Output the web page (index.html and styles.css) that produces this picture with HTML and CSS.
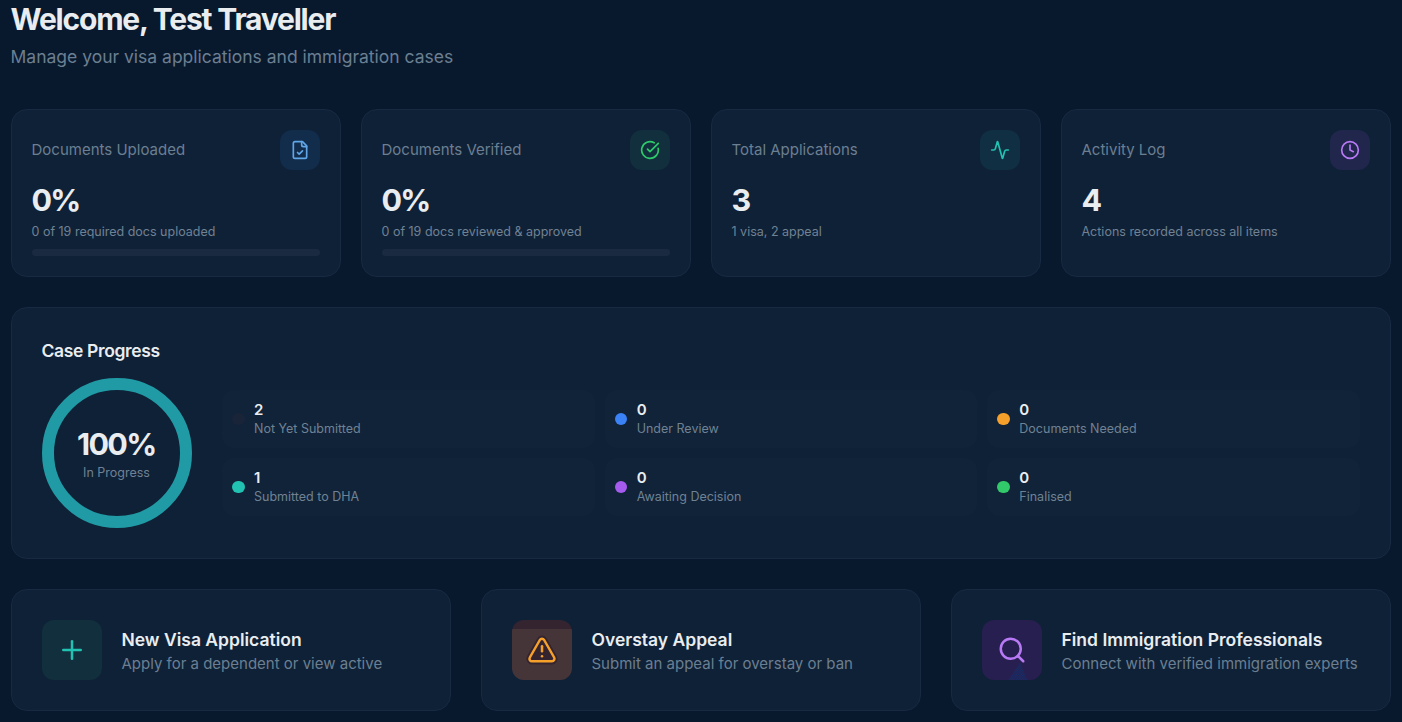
FILE: index.html
```html
<!DOCTYPE html>
<html lang="en">
<head>
<meta charset="utf-8">
<title>Dashboard</title>
<link rel="stylesheet" href="styles.css">
</head>
<body>
<main class="dashboard">
  <header class="welcome">
    <h1 class="welcome-title">Welcome, Test Traveller</h1>
    <p class="welcome-sub">Manage your visa applications and immigration cases</p>
  </header>

  <section class="stats">
    <article class="card stat">
      <div class="stat-head"><span class="stat-label">Documents Uploaded</span>
        <span class="stat-icon blue"><svg class="icon" viewBox="0 0 24 24"><path d="M15 2H6a2 2 0 0 0-2 2v16a2 2 0 0 0 2 2h12a2 2 0 0 0 2-2V7Z"/><path d="M14 2v4a2 2 0 0 0 2 2h4"/><path d="m9 15 2 2 4-4"/></svg></span></div>
      <div class="stat-value">0%</div>
      <div class="stat-note">0 of 19 required docs uploaded</div>
      <div class="bar"></div>
    </article>
    <article class="card stat">
      <div class="stat-head"><span class="stat-label">Documents Verified</span>
        <span class="stat-icon green"><svg class="icon" viewBox="0 0 24 24"><path d="M21.801 10A10 10 0 1 1 17 3.335"/><path d="m9 11 3 3L22 4"/></svg></span></div>
      <div class="stat-value">0%</div>
      <div class="stat-note">0 of 19 docs reviewed &amp; approved</div>
      <div class="bar"></div>
    </article>
    <article class="card stat">
      <div class="stat-head"><span class="stat-label">Total Applications</span>
        <span class="stat-icon teal"><svg class="icon" viewBox="0 0 24 24"><path d="M22 12h-2.48a2 2 0 0 0-1.93 1.46l-2.35 8.36a.25.25 0 0 1-.48 0L9.24 2.18a.25.25 0 0 0-.48 0l-2.35 8.36A2 2 0 0 1 4.49 12H2"/></svg></span></div>
      <div class="stat-value">3</div>
      <div class="stat-note">1 visa, 2 appeal</div>
    </article>
    <article class="card stat">
      <div class="stat-head"><span class="stat-label">Activity Log</span>
        <span class="stat-icon purple"><svg class="icon" viewBox="0 0 24 24"><circle cx="12" cy="12" r="10"/><path d="M12 6v6l4 2"/></svg></span></div>
      <div class="stat-value">4</div>
      <div class="stat-note">Actions recorded across all items</div>
    </article>
  </section>

  <section class="card progress">
    <h2 class="progress-title">Case Progress</h2>
    <div class="progress-body">
      <div class="ring">
        <div class="ring-value">100%</div>
        <div class="ring-label">In Progress</div>
      </div>
      <div class="statuses">
        <div class="status"><i class="dot dot-muted"></i><div class="status-text"><div class="status-count">2</div><div class="status-label">Not Yet Submitted</div></div></div>
        <div class="status"><i class="dot dot-blue"></i><div class="status-text"><div class="status-count">0</div><div class="status-label">Under Review</div></div></div>
        <div class="status"><i class="dot dot-orange"></i><div class="status-text"><div class="status-count">0</div><div class="status-label">Documents Needed</div></div></div>
        <div class="status"><i class="dot dot-teal"></i><div class="status-text"><div class="status-count">1</div><div class="status-label">Submitted to DHA</div></div></div>
        <div class="status"><i class="dot dot-purple"></i><div class="status-text"><div class="status-count">0</div><div class="status-label">Awaiting Decision</div></div></div>
        <div class="status"><i class="dot dot-green"></i><div class="status-text"><div class="status-count">0</div><div class="status-label">Finalised</div></div></div>
      </div>
    </div>
  </section>

  <section class="actions">
    <a class="card action">
      <span class="action-icon add"><svg class="icon" viewBox="0 0 24 24"><path d="M5 12h14"/><path d="M12 5v14"/></svg></span>
      <span class="action-text"><span class="action-title">New Visa Application</span><span class="action-sub">Apply for a dependent or view active</span></span>
    </a>
    <a class="card action">
      <span class="action-icon warn"><svg class="icon" viewBox="0 0 24 24"><path class="halo" d="m21.73 18-8-14a2 2 0 0 0-3.48 0l-8 14A2 2 0 0 0 4 21h16a2 2 0 0 0 1.73-3Z"/><path d="m21.73 18-8-14a2 2 0 0 0-3.48 0l-8 14A2 2 0 0 0 4 21h16a2 2 0 0 0 1.73-3Z"/><path d="M12 9v4"/><path d="M12 17h.01"/></svg></span>
      <span class="action-text"><span class="action-title">Overstay Appeal</span><span class="action-sub">Submit an appeal for overstay or ban</span></span>
    </a>
    <a class="card action">
      <span class="action-icon find"><svg class="icon" viewBox="0 0 24 24"><defs><pattern id="dots" width="2" height="2" patternUnits="userSpaceOnUse"><rect class="speckle-dot" width="1" height="1"/><rect class="speckle-dot" x="1" y="1" width="1" height="1"/></pattern></defs><path class="speckle" fill="url(#dots)" d="M18.5 22 9 36H24Z"/><circle cx="11" cy="11" r="8"/><path d="m21 21-4.3-4.3"/></svg></span>
      <span class="action-text"><span class="action-title">Find Immigration Professionals</span><span class="action-sub">Connect with verified immigration experts</span></span>
    </a>
  </section>
</main>
</body>
</html>
```
FILE: styles.css
```css
* { box-sizing: border-box; }
html, body { height: 100%; overflow: hidden; }
body {
  margin: 0;
  background: #08192e;
  color: #e9edf0;
  font-family: Inter, "Liberation Sans", sans-serif;
}
.dashboard { padding: 0 11px; }
.welcome { height: 109px; }
.welcome-title {
  margin: 0 0 0 -0.5px;
  padding-top: 1px;
  font-size: 30px;
  line-height: 36px;
  font-weight: 700;
  letter-spacing: -1.2px;
}
.welcome-sub {
  margin: 7px 0 0 -0.5px;
  font-size: 17.5px;
  line-height: 26px;
  color: #6b7f91;
}
.card {
  background: #0f2137;
  border: 1px solid #172a41;
  border-radius: 16px;
}
.icon {
  width: 20px;
  height: 20px;
  fill: none;
  stroke: currentColor;
  stroke-width: 2;
  stroke-linecap: round;
  stroke-linejoin: round;
}

.stats {
  display: grid;
  grid-template-columns: repeat(4, 1fr);
  gap: 20px;
}
.stat { height: 168px; padding: 20px; }
.stat-head {
  display: flex;
  align-items: center;
  justify-content: space-between;
}
.stat-label { margin-left: -0.5px; font-size: 15px; line-height: 20px; color: #6b7f91; }
.stat-icon {
  display: flex;
  align-items: center;
  justify-content: center;
  width: 40px;
  height: 40px;
  border-radius: 12px;
}
.blue { background: #122c4b; color: #60a5e6; }
.green { background: #112f3c; color: #2fcb6b; }
.teal { background: #112f42; color: #22c2b2; }
.purple { background: #20264c; color: #b879f5; }
.stat-value {
  margin: 11px 0 0 -0.5px;
  font-size: 30.5px;
  line-height: 38px;
  font-weight: 700;
  letter-spacing: -1.7px;
}
.stat-note {
  margin: 4px 0 0 -0.5px;
  font-size: 12.5px;
  line-height: 18px;
  color: #6f8293;
}
.bar {
  height: 7px;
  margin-top: 8px;
  border-radius: 4px;
  background: #1a2a41;
}

.progress { height: 252px; margin-top: 30px; padding: 30px; }
.progress-title {
  margin: 0 0 0 -0.5px;
  height: 40px;
  font-size: 17.5px;
  line-height: 26px;
  font-weight: 600;
  letter-spacing: -0.36px;
}
.progress-body { display: flex; align-items: center; gap: 30px; }
.ring {
  flex: none;
  display: flex;
  flex-direction: column;
  align-items: center;
  justify-content: center;
  width: 150px;
  height: 150px;
  border: 12.5px solid #209ba5;
  border-radius: 50%;
}
.ring-value {
  padding: 0 1.5px 1px 0;
  font-size: 30.5px;
  line-height: 38px;
  font-weight: 700;
  letter-spacing: -1.7px;
}
.ring-label { padding-right: 1px; font-size: 12.5px; line-height: 18px; color: #6f8293; }
.statuses {
  flex: 1;
  display: grid;
  grid-template-columns: repeat(3, 1fr);
  gap: 10px;
}
.status {
  display: flex;
  align-items: center;
  gap: 10px;
  height: 58px;
  padding: 10px;
  border-radius: 12px;
  background: #112338;
}
.dot { width: 12.5px; height: 12.5px; margin-right: -0.5px; border-radius: 50%; }
.dot-muted { background: #192439; }
.dot-blue { background: #3b82f6; }
.dot-orange { background: #f5a02a; }
.dot-teal { background: #22c2b2; }
.dot-purple { background: #a65bef; }
.dot-green { background: #31c969; }
.status-count { font-size: 15px; line-height: 20px; font-weight: 600; }
.status-label { font-size: 12.5px; line-height: 18px; color: #6f8293; }

.actions {
  display: grid;
  grid-template-columns: repeat(3, 1fr);
  gap: 30px;
  margin-top: 30px;
}
.action {
  display: flex;
  align-items: center;
  gap: 19.5px;
  height: 122px;
  padding: 30px;
}
.action-icon {
  flex: none;
  display: flex;
  align-items: center;
  justify-content: center;
  width: 60px;
  height: 60px;
  border-radius: 12px;
  overflow: hidden;
}
.action-icon .icon { width: 30px; height: 30px; overflow: visible; }
.add { background: #112f3c; color: #22c2b2; }
.warn { background: linear-gradient(#33242f 9px, #463538 9px); color: #f5a02a; }
.find { background: #271f4f; color: #b879f5; }
.halo { fill: #33242f; stroke: #33242f; stroke-width: 5; }
.speckle { stroke: none; }
.speckle-dot { fill: #14306c; stroke: none; }
.action-text { display: flex; flex-direction: column; padding-top: 2px; white-space: nowrap; }
.action-title { font-size: 17.5px; line-height: 26px; font-weight: 600; }
.action-sub { font-size: 15px; line-height: 22px; color: #6b7f91; }
```
